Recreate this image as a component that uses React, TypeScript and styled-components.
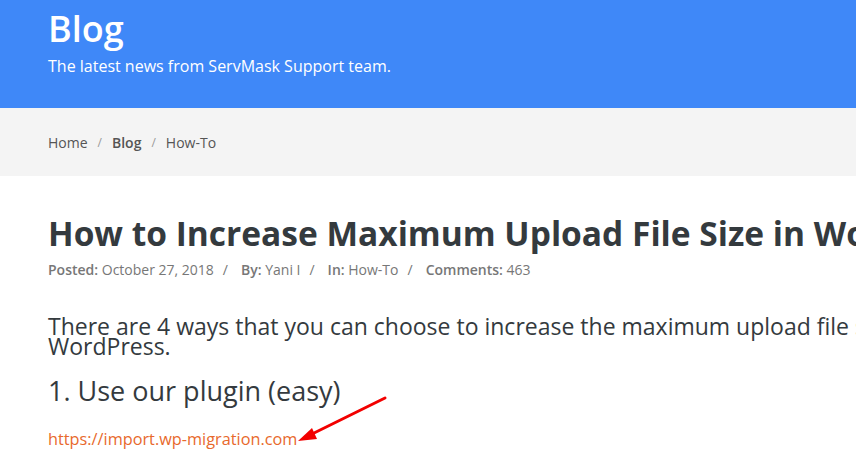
import styled, { createGlobalStyle } from "styled-components";

const GlobalStyle = createGlobalStyle`
  html, body {
    margin: 0;
    padding: 0;
    background: #fff;
    overflow: hidden;
  }
  body {
    font-family: "Open Sans", "Noto Sans", sans-serif;
  }
`;

const crumbs = ["Home", "Blog", "How-To"];

export default function App() {
    return (
        <Page>
            <GlobalStyle />
            <Header>
                <Title>Blog</Title>
                <Tagline>The latest news from ServMask Support team.</Tagline>
            </Header>
            <Crumbs>
                {crumbs.map((c, i) => (
                    <Crumb key={c}>
                        <CrumbLink $current={c === "Blog"}>{c}</CrumbLink>
                        {i < crumbs.length - 1 && <Sep>/</Sep>}
                    </Crumb>
                ))}
            </Crumbs>
            <Article>
                <PostTitle>How to Increase Maximum Upload File Size in WordPress</PostTitle>
                <Meta>
                    <b>Posted:</b> October 27, 2018<Slash>/</Slash>
                    <b>By:</b> Yani I<Slash>/</Slash>
                    <b>In:</b> How-To<Slash>/</Slash>
                    <b>Comments:</b> 463
                </Meta>
                <Lead>
                    There are 4 ways that you can choose to increase the maximum upload file size in WordPress.
                </Lead>
                <SubTitle>1. Use our plugin (easy)</SubTitle>
                <PluginLink href="#">https://import.wp-migration.com</PluginLink>
            </Article>
            {/* red annotation arrow drawn over the screenshot */}
            <Arrow width="100" height="56" viewBox="0 0 100 56">
                <line x1="87" y1="4" x2="12" y2="41" stroke="#f20000" strokeWidth="3" strokeLinecap="round" />
                <polygon points="0,47 14,34 19,45" fill="#f20000" />
            </Arrow>
        </Page>
    );
}

const Page = styled.div`
    position: relative;
    width: 856px;
    height: 461px;
    overflow: hidden;
`

const Header = styled.header`
    background: #3f88f8;
    height: 108px;
    padding: 7px 48px 0;
    box-sizing: border-box;
    color: #fff;
`

const Title = styled.h1`
    margin: 0;
    font-size: 36px;
    font-weight: 600;
    line-height: 44px;
`

const Tagline = styled.p`
    margin: 5px 0 0;
    font-size: 16px;
    line-height: 20px;
`

const Crumbs = styled.nav`
    background: #f4f4f4;
    height: 68px;
    padding: 0 48px;
    display: flex;
    align-items: center;
    font-size: 14px;
`

const Crumb = styled.span`
    display: flex;
    align-items: center;
`

const CrumbLink = styled.span<{ $current?: boolean }>`
    color: #555;
    font-weight: ${p => (p.$current ? 600 : 400)};
`

const Sep = styled.span`
    color: #999;
    margin: 0 10px;
    font-size: 12px;
`

const Article = styled.main`
    padding: 37px 48px 0;
    white-space: nowrap;
`

const PostTitle = styled.h2`
    margin: 0;
    font-size: 33.5px;
    font-weight: 700;
    line-height: 40px;
    color: #343a3e;
`

const Meta = styled.div`
    margin-top: 7px;
    font-size: 14px;
    line-height: 20px;
    color: #777;
    b {
        font-weight: 600;
    }
`

const Slash = styled.span`
    margin: 0 13px 0 9px;
`

const Lead = styled.p`
    margin: 36px 0 0;
    font-size: 23px;
    line-height: 20px;
    color: #343a3e;
    white-space: normal;
    width: 960px;
`

const SubTitle = styled.h3`
    margin: 18px 0 0;
    font-size: 27px;
    font-weight: 400;
    line-height: 34px;
    color: #343a3e;
`

const PluginLink = styled.a`
    display: block;
    margin-top: 21px;
    font-size: 16.3px;
    line-height: 20px;
    color: #e8692c;
    text-decoration: none;
`

const Arrow = styled.svg`
    position: absolute;
    left: 298px;
    top: 394px;
`
